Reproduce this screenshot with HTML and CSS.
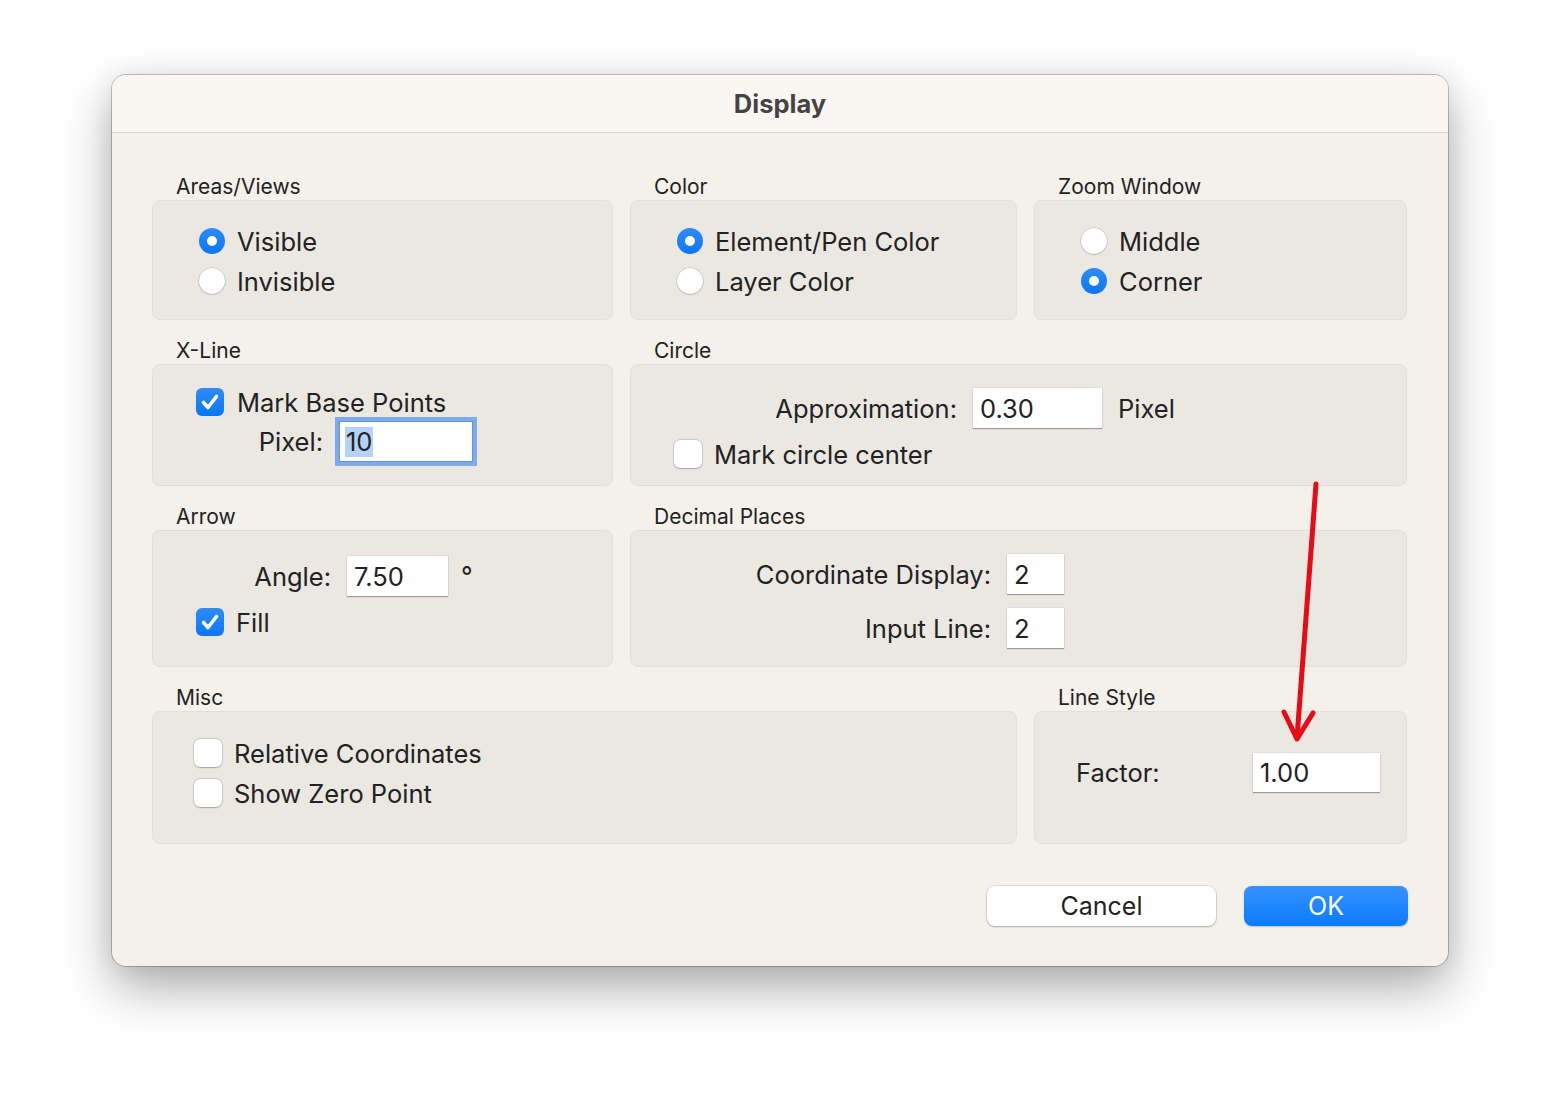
FILE: index.html
```html
<!DOCTYPE html>
<html>
<head>
<meta charset="utf-8">
<title>Display</title>
<link rel="stylesheet" href="styles.css">
</head>
<body>
<div class="stage">
  <div class="window">
    <div class="titlebar">Display</div>
    <div class="content">
      <div class="grid">
        <section class="group">
          <div class="glabel">Areas/Views</div>
          <div class="box h1 list">
            <div class="opt"><span class="radio on"></span><span>Visible</span></div>
            <div class="opt"><span class="radio"></span><span>Invisible</span></div>
          </div>
        </section>
        <section class="group">
          <div class="glabel">Color</div>
          <div class="box h1 list">
            <div class="opt"><span class="radio on"></span><span>Element/Pen Color</span></div>
            <div class="opt"><span class="radio"></span><span>Layer Color</span></div>
          </div>
        </section>
        <section class="group">
          <div class="glabel">Zoom Window</div>
          <div class="box h1 list">
            <div class="opt"><span class="radio"></span><span>Middle</span></div>
            <div class="opt"><span class="radio on"></span><span>Corner</span></div>
          </div>
        </section>

        <section class="group">
          <div class="glabel">X-Line</div>
          <div class="box h2 xline">
            <div class="opt chk-row"><span class="check on"><svg viewBox="0 0 28 28"><path d="M7.5 14.5 L12 19.5 L20.5 8.5" /></svg></span><span>Mark Base Points</span></div>
            <div class="field-row pixel-row"><span class="flabel">Pixel:</span><span class="input focus w132"><span class="sel">10</span></span></div>
          </div>
        </section>
        <section class="group span2">
          <div class="glabel">Circle</div>
          <div class="box h2 circle">
            <div class="field-row approx-row"><span class="flabel">Approximation:</span><span class="input w129">0.30</span><span class="unit">Pixel</span></div>
            <div class="opt chk-row center-row"><span class="check"></span><span>Mark circle center</span></div>
          </div>
        </section>

        <section class="group">
          <div class="glabel">Arrow</div>
          <div class="box h3 arrow">
            <div class="field-row angle-row"><span class="flabel">Angle:</span><span class="input w101">7.50</span><span class="deg">°</span></div>
            <div class="opt chk-row fill-row"><span class="check on"><svg viewBox="0 0 28 28"><path d="M7.5 14.5 L12 19.5 L20.5 8.5" /></svg></span><span>Fill</span></div>
          </div>
        </section>
        <section class="group span2">
          <div class="glabel">Decimal Places</div>
          <div class="box h3 decimal">
            <span class="flabel">Coordinate Display:</span><span class="input w57">2</span>
            <span class="flabel">Input Line:</span><span class="input w57">2</span>
          </div>
        </section>

        <section class="group span2">
          <div class="glabel">Misc</div>
          <div class="box h4 list misc">
            <div class="opt"><span class="check"></span><span>Relative Coordinates</span></div>
            <div class="opt"><span class="check"></span><span>Show Zero Point</span></div>
          </div>
        </section>
        <section class="group">
          <div class="glabel">Line Style</div>
          <div class="box h4 linestyle">
            <span class="flabel left">Factor:</span><span class="input w127">1.00</span>
          </div>
        </section>
      </div>
      <div class="buttons">
        <button class="btn cancel">Cancel</button>
        <button class="btn ok">OK</button>
      </div>
    </div>
  </div>
  <svg class="annot" width="1560" height="1114" viewBox="0 0 1560 1114">
    <path d="M1316 484 L1297 738" />
    <path d="M1284 712 L1297 739 L1313 713" />
  </svg>
</div>
</body>
</html>
```

FILE: styles.css
```css
* { box-sizing: border-box; }
html, body { margin: 0; padding: 0; }
body {
  background: #ffffff;
  font-family: Inter, "Noto Sans", "Liberation Sans", sans-serif;
  color: #222;
}
.stage {
  position: relative;
  width: 1560px;
  height: 1114px;
  padding-top: 75px;
  overflow: hidden;
}
.window {
  margin: 0 auto;
  width: 1336px;
  height: 891px;
  background: #f4f1eb;
  border-radius: 14px;
  box-shadow: 0 0 0 1px rgba(0,0,0,0.22), 0 22px 50px rgba(0,0,0,0.32), 0 0 24px rgba(0,0,0,0.08);
  overflow: hidden;
}
.titlebar {
  height: 58px;
  background: #faf7f2;
  border-bottom: 1px solid #d6d3ce;
  display: flex;
  align-items: center;
  justify-content: center;
  font-weight: 700;
  font-size: 25.5px;
  color: #444;
  padding-bottom: 1px;
}
.content {
  padding: 41px 40px 0 40px;
}
.grid {
  display: grid;
  grid-template-columns: 461px 387px 373px;
  column-gap: 17px;
  row-gap: 18px;
}
.span2 { grid-column: span 2; }
.glabel {
  height: 26px;
  line-height: 26px;
  font-size: 21px;
  padding-left: 24px;
  color: #222;
}
.box {
  background: #ebe8e2;
  border: 1px solid #e2dfd9;
  border-radius: 8px;
}
.h1 { height: 120px; }
.h2 { height: 122px; }
.h3 { height: 137px; }
.h4 { height: 133px; }

.opt {
  display: flex;
  align-items: center;
  height: 40px;
  font-size: 25.5px;
  gap: 12px;
}
.list { padding: 20px 0 0 46px; }
.misc { padding: 21px 0 0 41px; }

.radio {
  width: 26px;
  height: 26px;
  border-radius: 50%;
  background: #fff;
  box-shadow: 0 0 0 0.5px rgba(0,0,0,0.18), 0 0.5px 1.5px rgba(0,0,0,0.22);
  flex: none;
  display: inline-flex;
  align-items: center;
  justify-content: center;
}
.radio.on {
  background: linear-gradient(#2f8cfb, #0a76f4);
  box-shadow: none;
}
.radio.on::after {
  content: "";
  width: 10px;
  height: 10px;
  border-radius: 50%;
  background: #fff;
}
.check {
  width: 28px;
  height: 28px;
  border-radius: 6px;
  background: #fff;
  box-shadow: 0 0 0 0.5px rgba(0,0,0,0.18), 0 0.5px 1.5px rgba(0,0,0,0.22);
  flex: none;
  display: inline-flex;
}
.check.on {
  background: linear-gradient(#2f8cfb, #0a76f4);
  box-shadow: none;
}
.check svg { width: 28px; height: 28px; }
.check svg path {
  fill: none;
  stroke: #fff;
  stroke-width: 3.6;
  stroke-linecap: round;
  stroke-linejoin: round;
}

.input {
  display: inline-flex;
  align-items: center;
  height: 40px;
  background: #fff;
  font-size: 25.5px;
  padding-left: 7px;
  color: #222;
  box-shadow: 0 0 0 0.5px rgba(0,0,0,0.08), 0 1px 1px rgba(0,0,0,0.3);
  flex: none;
}
.w132 { width: 132px; height: 39px; }
.w129 { width: 129px; }
.w101 { width: 101px; }
.w57 { width: 57px; }
.w127 { width: 127px; height: 39px; }
.input.focus {
  box-shadow: 0 0 0 1px #5f95e0, 0 0 0 5px #7eaaea;
}
.sel {
  background: #b3d3fb;
  line-height: 30px;
  padding: 0 1px;
  margin-left: -2px;
}
.flabel {
  font-size: 25.5px;
  text-align: right;
  white-space: nowrap;
}
.field-row {
  display: flex;
  align-items: center;
}

/* X-Line */
.xline { padding: 17px 0 0 43px; }
.chk-row { gap: 13px; }
.pixel-row {
  gap: 17px;
}
.pixel-row .flabel { width: 127px; }

/* Circle */
.circle { padding: 23px 0 0 43px; }
.approx-row { gap: 16px; }
.approx-row .flabel { width: 283px; }
.approx-row .unit { font-size: 25.5px; }
.center-row { margin-top: 6px; gap: 12px; }

/* Arrow */
.arrow { padding: 25px 0 0 43px; }
.angle-row { gap: 16px; }
.angle-row .flabel { width: 135px; }
.deg { font-size: 25.5px; align-self: flex-start; margin-top: 4px; margin-left: -3px; }
.fill-row { margin-top: 6px; gap: 12px; }

/* Decimal */
.decimal {
  display: grid;
  grid-template-columns: 345px 57px;
  grid-auto-rows: 40px;
  column-gap: 16px;
  row-gap: 14px;
  align-items: center;
  padding: 23px 0 0 15px;
}

/* Line style */
.linestyle {
  display: flex;
  align-items: center;
  padding: 0 0 10px 41px;
}
.linestyle .flabel { width: 177px; text-align: left; }

/* Buttons */
.buttons {
  display: flex;
  justify-content: flex-end;
  gap: 28px;
  margin-top: 42px;
}
.btn {
  height: 40px;
  border: none;
  border-radius: 8px;
  font-family: Inter, "Noto Sans", "Liberation Sans", sans-serif;
  font-size: 25px;
  padding: 0;
}
.cancel {
  width: 229px;
  background: #fff;
  color: #222;
  box-shadow: 0 0 0 0.5px rgba(0,0,0,0.14), 0 1px 2px rgba(0,0,0,0.25);
}
.ok {
  width: 164px;
  background: linear-gradient(#3592ff, #0a7bff);
  color: #fff;
  box-shadow: 0 0.5px 1.5px rgba(0,0,0,0.2);
}

.annot {
  position: absolute;
  left: 0;
  top: 0;
  pointer-events: none;
}
.annot path {
  fill: none;
  stroke: #ea0a17;
  stroke-width: 5;
  stroke-linecap: round;
  stroke-linejoin: round;
}
```
